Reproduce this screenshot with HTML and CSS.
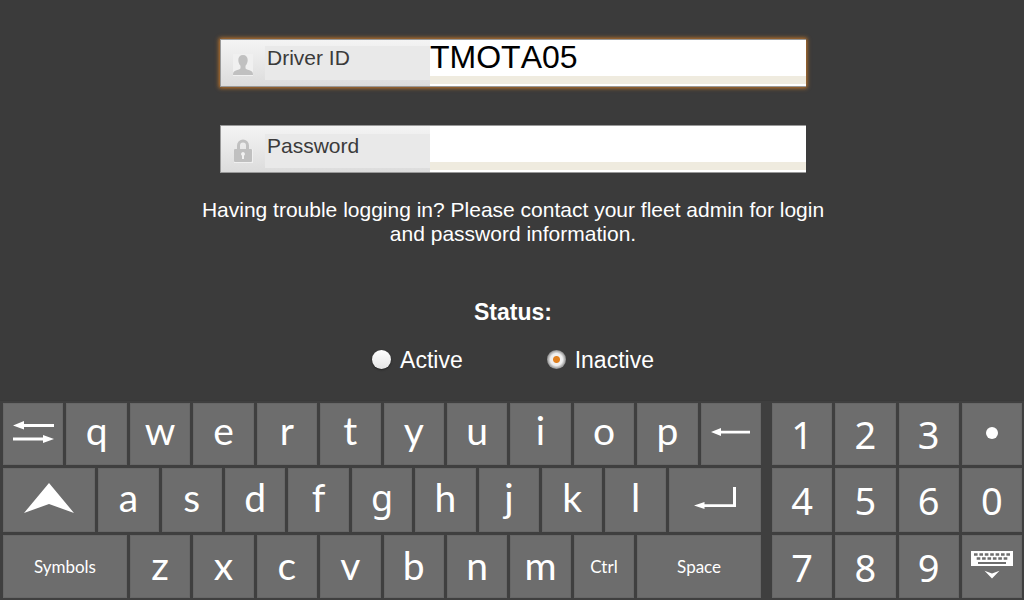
FILE: index.html
```html
<!DOCTYPE html>
<html lang="en">
<head>
<meta charset="utf-8">
<title>Driver login</title>
<link rel="stylesheet" href="styles.css">
</head>
<body>
<main class="login">
  <form class="form">
    <div class="field field-active">
      <label class="field-label" for="driver">
        <svg class="field-icon" viewBox="0 0 20 22" aria-hidden="true"><path fill="#f0f0f0" d="M0 0h20v22H0z"/><path fill="#c0c0c0" d="M10 1c3 0 4.700 2 4.700 5 0 2.500-1 4.500-2.200 5.700V14c0 1 1.500 1.500 4 2.300 2.500.8 3.500 1.700 3.500 4.700H0c0-3 1-3.900 3.500-4.700 2.500-.8 4-1.300 4-2.300v-2.300C6.300 10.500 5.300 8.500 5.300 6c0-3 1.700-5 4.700-5z"/></svg>
        <span class="field-text">Driver ID</span>
      </label>
      <input class="field-input" id="driver" type="text" value="TMOTA05">
    </div>
    <div class="field">
      <label class="field-label" for="password">
        <svg class="field-icon" viewBox="0 0 20 24" aria-hidden="true"><path fill="#f0f0f0" d="M1 10h19v14H1z"/><path fill="none" stroke="#c0c0c0" stroke-width="3" d="M5.500 10V6.500a4.500 4.500 0 0 1 9 0V10"/><rect x="1" y="10" width="18" height="13" rx="1" fill="#c0c0c0"/><path fill="#f2f2f2" d="M10 13a2 2 0 0 1 1 3.700V20H9v-3.300A2 2 0 0 1 10 13z"/></svg>
        <span class="field-text">Password</span>
      </label>
      <input class="field-input" id="password" type="password">
    </div>
    <p class="help">Having trouble logging in? Please contact your fleet admin for login and password information.</p>
    <fieldset class="status">
      <legend class="status-title">Status:</legend>
      <div class="options">
        <label class="option"><input class="radio" type="radio" name="status">Active</label>
        <label class="option"><input class="radio" type="radio" name="status" checked>Inactive</label>
      </div>
    </fieldset>
  </form>
</main>
<section class="keyboard" aria-label="Keyboard">
  <div class="letters">
    <button class="key" aria-label="Tab"><svg class="arrow-icon" viewBox="0 0 41 22"><path fill="#fff" d="M0 4.500 11 0v3h30v3H11v2.500zM41 18 30 22v-2.500H0v-3h30V14z"/></svg></button>
    <button class="key top">q</button>
    <button class="key top">w</button>
    <button class="key top">e</button>
    <button class="key top">r</button>
    <button class="key top">t</button>
    <button class="key top">y</button>
    <button class="key top">u</button>
    <button class="key top">i</button>
    <button class="key top">o</button>
    <button class="key top">p</button>
    <button class="key" aria-label="Backspace"><svg class="back-icon" viewBox="0 0 39 8"><path fill="#fff" d="M0 4 10 0v2.800h29v2.800H10V8z"/></svg></button>
    <button class="key wide" aria-label="Shift"><svg class="shift-icon" viewBox="0 0 50 30"><path fill="#fff" d="M25 0 50 30 25 21 0 30z"/></svg></button>
    <button class="key">a</button>
    <button class="key">s</button>
    <button class="key">d</button>
    <button class="key">f</button>
    <button class="key single-story">g</button>
    <button class="key">h</button>
    <button class="key">j</button>
    <button class="key">k</button>
    <button class="key">l</button>
    <button class="key wide" aria-label="Enter"><svg class="enter-icon" viewBox="0 0 42 22"><path fill="#fff" d="M0 18.500 10.500 15v2.300H39V0h3v20H10.500v2z"/></svg></button>
    <button class="key widest word">Symbols</button>
    <button class="key bottom">z</button>
    <button class="key bottom">x</button>
    <button class="key bottom">c</button>
    <button class="key bottom">v</button>
    <button class="key bottom">b</button>
    <button class="key bottom">n</button>
    <button class="key bottom">m</button>
    <button class="key word">Ctrl</button>
    <button class="key widest word">Space</button>
  </div>
  <div class="numbers">
    <button class="key digit">1</button>
    <button class="key digit">2</button>
    <button class="key digit">3</button>
    <button class="key bottom" aria-label="Point"><svg class="dot-icon" viewBox="0 0 12 12"><circle cx="6" cy="6" r="6" fill="#fff"/></svg></button>
    <button class="key digit">4</button>
    <button class="key digit">5</button>
    <button class="key digit">6</button>
    <button class="key digit">0</button>
    <button class="key digit">7</button>
    <button class="key digit">8</button>
    <button class="key digit">9</button>
    <button class="key bottom" aria-label="Hide keyboard"><svg class="hide-icon" viewBox="0 0 42 28"><path fill="#fff" d="M0 0h42v15H0z"/><path stroke="#6d6d6d" stroke-width="2.600" stroke-dasharray="3.600 1.800" d="M3 3.500h36.200"/><path stroke="#6d6d6d" stroke-width="2.600" stroke-dasharray="3.600 1.800" d="M5.700 7.500h30.800"/><path stroke="#6d6d6d" stroke-width="2" d="M7 12h28"/><path fill="#fff" d="M13.500 19.800 21 22.500l7.500-2.700L21 27.500z"/></svg></button>
  </div>
</section>
</body>
</html>
```
FILE: styles.css
```css
* {
  box-sizing: border-box;
}

body {
  display: flex;
  flex-direction: column;
  min-height: 100vh;
  margin: 0;
  background: #3b3b3b;
  color: #fff;
  font-family: "Liberation Sans", Arial, sans-serif;
}

.login {
  flex: 1;
  padding: 39px 15px 24px 17px;
}

.form {
  display: flex;
  flex-direction: column;
  align-items: center;
}

.field {
  display: flex;
  width: 100%;
  max-width: 586px;
  height: 48px;
  margin-bottom: 38px;
  border: 1px solid #999;
  border-right: 0;
  background: linear-gradient(#f4f4f4, #dcdcdc);
}

.field + .field {
  margin-bottom: 25px;
}

.field-active {
  box-shadow: 0 0 4px 1px #c87828;
}

.field-label {
  display: flex;
  flex: 0 0 209px;
  padding: 6px 0;
  color: #3b3b3b;
  font-size: 21px;
  line-height: 24px;
}

.field + .field .field-label {
  padding: 8px 0 4px;
}

.field-icon {
  flex: none;
  width: 20px;
  height: 24px;
  margin: 7px 12px 0;
}

.field + .field .field-icon {
  margin-top: 5px;
}

.field-text {
  flex: 1;
  padding-left: 2px;
  background: #e9e9e9;
}

.field-input {
  flex: 1;
  min-width: 0;
  padding: 0 0 11px;
  border: 0;
  outline: 0;
  background: linear-gradient(#fff 36px, #efebdf 36px, #efebdf 44px, #fff 44px);
  color: #000;
  font: 32px "Liberation Sans", Arial, sans-serif;
  font-kerning: none;
}

.help {
  max-width: 640px;
  margin: 0;
  font-size: 21px;
  line-height: 24px;
  text-align: center;
}

.status {
  margin: 54px 0 0;
  padding: 0;
  border: 0;
}

.status-title {
  margin: 0 auto;
  padding: 0;
  font-size: 23px;
  font-weight: bold;
  line-height: 24px;
}

.options {
  display: flex;
  gap: 84px;
  margin-top: 24px;
}

.option {
  display: flex;
  align-items: center;
  gap: 9px;
  font-size: 23px;
  line-height: 24px;
}

.radio {
  appearance: none;
  width: 19px;
  height: 19px;
  margin: 0 0 2px;
  border-radius: 50%;
  background: linear-gradient(#fff, #e4e4e4);
  box-shadow: 0 1px 2px #222;
}

.radio:checked {
  background: radial-gradient(circle, #e08020 3px, #f0f0f0 4px, #eee 6px, #999 9px);
  box-shadow: none;
}

.keyboard {
  display: grid;
  grid-template-columns: 758fr 250fr;
  gap: 11px;
  padding: 2px 2px 2px 3px;
  border-top: 1px solid #393939;
  background: #3f3f3f;
}

.letters,
.numbers {
  display: grid;
  grid-template-rows: 62px 64px 63px;
  gap: 3px;
}

.letters {
  grid-template-columns: repeat(24, minmax(0, 1fr));
}

.numbers {
  grid-template-columns: repeat(4, minmax(0, 1fr));
}

.key {
  display: flex;
  align-items: center;
  justify-content: center;
  padding: 0 0 6px;
  border: 1px solid #676767;
  background: #6d6d6d;
  color: #fff;
  font: 39px Lato, sans-serif;
}

.letters .key {
  grid-column: span 2;
}

.letters .wide {
  grid-column: span 3;
}

.letters .widest {
  grid-column: span 4;
}

.letters .key:has(svg) {
  padding-bottom: 4px;
}

.top {
  padding-bottom: 9px;
}

.bottom {
  padding-bottom: 3px;
}

.single-story {
  font: 36px "Noto Sans", sans-serif;
}

.digit {
  padding-bottom: 0;
  font: 38px "Noto Sans", sans-serif;
}

.word {
  padding-bottom: 0;
  font-size: 17px;
}

.arrow-icon {
  width: 41px;
  height: 22px;
}

.back-icon {
  width: 39px;
  height: 8px;
}

.shift-icon {
  width: 50px;
  height: 30px;
}

.enter-icon {
  width: 42px;
  height: 22px;
}

.dot-icon {
  width: 12px;
  height: 12px;
}

.hide-icon {
  width: 42px;
  height: 28px;
}
```
